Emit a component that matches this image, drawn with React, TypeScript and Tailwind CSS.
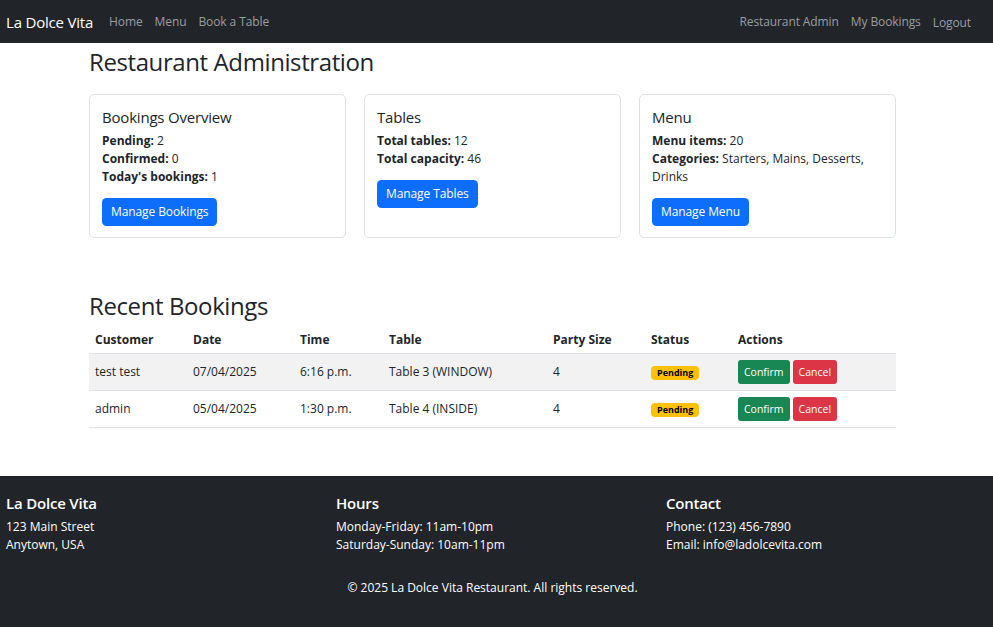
import React from "react";

const bookings = [
  { customer: "test test", date: "07/04/2025", time: "6:16 p.m.", table: "Table 3 (WINDOW)", size: 4 },
  { customer: "admin", date: "05/04/2025", time: "1:30 p.m.", table: "Table 4 (INSIDE)", size: 4 },
];

function Card({ title, children }: { title: string; children: React.ReactNode }) {
  return (
    <div className="flex flex-col rounded-[5px] border border-[#dee2e6] px-[12px] pb-[11px] pt-[13px]">
      <h5 className="mb-[6px] text-[15px] font-medium leading-[18px] tracking-[-0.2px]">{title}</h5>
      {children}
    </div>
  );
}

function PrimaryButton({ label }: { label: string }) {
  return (
    <div>
      <button className="h-[28px] rounded-[4.5px] bg-[#0d6efd] px-[9px] text-[12px] leading-[18px] tracking-[-0.1px] text-white">
        {label}
      </button>
    </div>
  );
}

export default function App() {
  return (
    <div className="flex min-h-[627px] flex-col bg-white font-['Open_Sans',sans-serif] text-[12px] leading-[18px] text-[#212529]">
      {/* navbar */}
      <nav className="flex h-[43px] items-center bg-[#212529] pl-[6px] pr-[22px]">
        <span className="mr-[10px] text-[15px] tracking-[-0.2px] text-white">La Dolce Vita</span>
        <ul className="flex tracking-[-0.1px] text-[#9a9da0]">
          <li className="px-[6px]">Home</li>
          <li className="px-[6px]">Menu</li>
          <li className="px-[6px]">Book a Table</li>
        </ul>
        <ul className="ml-auto flex items-center tracking-[-0.1px] text-[#9a9da0]">
          <li className="px-[6px]">Restaurant Admin</li>
          <li className="px-[6px]">My Bookings</li>
          <li className="pl-[6px] pt-[2px]">Logout</li>
        </ul>
      </nav>

      <main className="ml-[89px] w-[807px]">
        <h2 className="mt-[4px] text-[24px] font-medium leading-[29px] tracking-[-0.4px]">Restaurant Administration</h2>

        <div className="mt-[18px] grid grid-cols-3 gap-[18px]">
          <Card title="Bookings Overview">
            <p><b>Pending:</b> 2</p>
            <p><b>Confirmed:</b> 0</p>
            <p className="mb-[12px]"><b>Today's bookings:</b> 1</p>
            <PrimaryButton label="Manage Bookings" />
          </Card>
          <Card title="Tables">
            <p><b>Total tables:</b> 12</p>
            <p className="mb-[12px]"><b>Total capacity:</b> 46</p>
            <PrimaryButton label="Manage Tables" />
          </Card>
          <Card title="Menu">
            <p><b>Menu items:</b> 20</p>
            <p className="mb-[12px]">
              <b>Categories:</b> Starters, Mains, Desserts,
              <br />
              Drinks
            </p>
            <PrimaryButton label="Manage Menu" />
          </Card>
        </div>

        <h2 className="mt-[53px] text-[24px] font-medium leading-[29px] tracking-[-0.4px]">Recent Bookings</h2>

        <table className="mt-[3px] w-full table-fixed border-collapse text-left">
          <colgroup>
            <col className="w-[98px]" />
            <col className="w-[107px]" />
            <col className="w-[89px]" />
            <col className="w-[164px]" />
            <col className="w-[98px]" />
            <col className="w-[87px]" />
            <col />
          </colgroup>
          <thead>
            <tr className="border-b border-[#dee2e6]">
              {["Customer", "Date", "Time", "Table", "Party Size", "Status", "Actions"].map((h) => (
                <th key={h} className="px-[6px] pb-[4px] pt-[8px] font-bold">{h}</th>
              ))}
            </tr>
          </thead>
          <tbody>
            {bookings.map((b, i) => (
              <tr key={b.customer} className={`border-b border-[#dee2e6] ${i % 2 === 0 ? "bg-[#f2f2f2]" : ""}`}>
                <td className="p-[6px]">{b.customer}</td>
                <td className="p-[6px]">{b.date}</td>
                <td className="p-[6px]">{b.time}</td>
                <td className="p-[6px]">{b.table}</td>
                <td className="p-[6px]">{b.size}</td>
                <td className="p-[6px]">
                  <span className="inline-block rounded-[4px] bg-[#ffc107] px-[6px] py-[2px] text-[9px] font-bold leading-[10px] text-black">
                    Pending
                  </span>
                </td>
                <td className="p-[6px]">
                  <div className="flex gap-[3px]">
                    <button className="h-[24px] rounded-[3px] bg-[#198754] px-[6px] text-[10.5px] text-white">Confirm</button>
                    <button className="h-[24px] rounded-[3px] bg-[#dc3545] px-[6px] text-[10.5px] text-white">Cancel</button>
                  </div>
                </td>
              </tr>
            ))}
          </tbody>
        </table>
      </main>

      {/* footer */}
      <footer className="mt-[48px] flex-1 bg-[#212529] pl-[6px] pt-[18px] text-white">
        <div className="grid grid-cols-[330px_330px_1fr]">
          <div>
            <h5 className="mb-[6px] text-[15px] font-semibold leading-[18px] tracking-[-0.2px]">La Dolce Vita</h5>
            <p>123 Main Street</p>
            <p>Anytown, USA</p>
          </div>
          <div>
            <h5 className="mb-[6px] text-[15px] font-semibold leading-[18px] tracking-[-0.2px]">Hours</h5>
            <p>Monday-Friday: 11am-10pm</p>
            <p>Saturday-Sunday: 10am-11pm</p>
          </div>
          <div>
            <h5 className="mb-[6px] text-[15px] font-semibold leading-[18px] tracking-[-0.2px]">Contact</h5>
            <p>Phone: (123) 456-7890</p>
            <p>Email: info@ladolcevita.com</p>
          </div>
        </div>
        <p className="mt-[25px] pr-[14px] text-center">© 2025 La Dolce Vita Restaurant. All rights reserved.</p>
      </footer>
    </div>
  );
}
